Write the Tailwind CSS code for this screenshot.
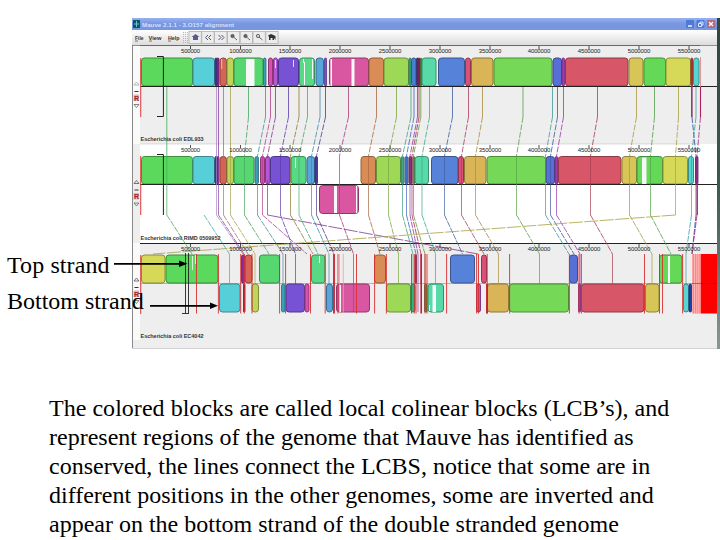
<!DOCTYPE html>
<html lang="en">
<head>
    <meta charset="UTF-8">
    <meta name="viewport" content="width=device-width, initial-scale=1.0">
    <title>Mauve alignment</title>
    <script src="https://cdn.jsdelivr.net/npm/@tailwindcss/browser@4"></script>
</head>
<body class="bg-white w-[720px] h-[540px] overflow-hidden relative font-['Liberation_Serif',serif] text-black">
    <div class="pt-[18px] pl-[132px] flex">
        <div class="w-[585px] h-[331px] bg-[#eeeeee] flex flex-col font-['Liberation_Sans',sans-serif]">
            <!-- title bar -->
            <div class="h-3 shrink-0 bg-linear-to-b from-[#98b1ed] via-[#7796e1] to-[#7896df] flex items-center justify-between pr-[1px] pl-px">
                <div class="flex items-center gap-[2px]">
                    <svg class="w-[7px] h-[8px]" viewBox="0 0 7 8"><rect width="7" height="8" fill="#0c5369"/><path d="M3.5 1v6M1 4h5" stroke="#62c9cc"/></svg>
                    <svg class="w-[94px] h-3" viewBox="0 0 94 12"><text x="0" y="8.5" font-size="6.2" font-weight="bold" fill="#d3dfff" textLength="92">Mauve 2.1.1 - 3.O157 alignment</text></svg>
                </div>
                <svg class="w-[30px] h-[10px]" viewBox="0 0 30 10">
                    <rect x="0" y="1" width="8" height="8" rx="1" fill="#4d78dc"/><path d="M2 7h4" stroke="#fff" stroke-width="1.4"/>
                    <rect x="10.5" y="1" width="8" height="8" rx="1" fill="#4d78dc"/><path d="M14 4V3h3v3h-1M12.5 4.5h3v3h-3z" fill="none" stroke="#dfe8ff"/>
                    <rect x="21" y="1" width="8" height="8" rx="1" fill="#b4687f"/><path d="M23 3l4 4M27 3l-4 4" stroke="#fff" stroke-width="1.3"/>
                </svg>
            </div>
            <!-- menu and tool bar -->
            <div class="h-[15px] shrink-0 bg-linear-to-b from-white to-[#dcdcdc]">
                <svg class="w-[150px] h-[15px]" viewBox="0 0 150 15" font-size="6" font-weight="bold" fill="#333">
                    <text x="3" y="9.5" textLength="8.5" lengthAdjust="spacingAndGlyphs">File</text>
                    <text x="16.5" y="9.5" textLength="13" lengthAdjust="spacingAndGlyphs">View</text>
                    <text x="36" y="9.5" textLength="11.500" lengthAdjust="spacingAndGlyphs">Help</text>
                    <path d="M3 11h3M17 11h3M36 11h3" stroke="#444" stroke-width=".7"/>
                    <path d="M51.500 2v12M53.500 2v12M55.500 2v12" stroke="#aaa" stroke-dasharray="1 1" stroke-width=".8"/>
                    <g id="buttons" stroke="#b0b0b0" stroke-width=".8" fill="#ececec"></g>
                    <path d="M59.500 7l4-3 4 3h-1.500v3h-5v-3z" fill="#5b5b8c"/>
                    <path d="M76 5l-2.500 2.500 2.500 2.500M79 5l-2.500 2.500 2.500 2.500M86.500 5l2.500 2.500-2.500 2.500M89.500 5l2.500 2.500-2.500 2.500" stroke="#555577" fill="none"/>
                    <g fill="#666" stroke="#444" stroke-width=".8"><circle cx="100.500" cy="6" r="1.600"/><path d="M101.500 7l3.500 3"/><circle cx="113.500" cy="6" r="1.600"/><path d="M114.500 7l3.500 3"/><circle cx="126" cy="6" r="1.600" fill="#ddd"/><path d="M127 7l3.500 3"/></g>
                    <path d="M136 5.500l3-1.500 4.500 2v4l-1.500-2v2h-1.500v-2h-2v2H137V7z" fill="#333"/>
                </svg>
            </div>
            <!-- alignment panels, drawn in page coordinates -->
            <svg id="map" class="w-[585px] h-[304px] shrink-0" viewBox="132 45 585 304"></svg>
        </div>
        <div class="w-[3px] h-[331px] bg-linear-to-b from-[#34433e] via-[#3e5951] to-[#8a9692]"></div>
    </div>

    <div class="pt-[45px] pl-[49px] text-[24px] leading-[29px] whitespace-nowrap">
        <p class="tracking-[0.03px]">The colored blocks are called local colinear blocks (LCB’s), and</p>
        <p>represent regions of the genome that Mauve has identified as</p>
        <p>conserved, the lines connect the LCBS, notice that some are in</p>
        <p>different positions in the other genomes, some are inverted and</p>
        <p>appear on the bottom strand of the double stranded genome</p>
    </div>

    <!-- strand callouts over the alignment -->
    <p class="absolute left-[7px] top-[251px] text-[24px] leading-[29px] whitespace-nowrap tracking-[0.1px]">Top strand</p>
    <p class="absolute left-[7px] top-[287px] text-[24px] leading-[29px] whitespace-nowrap">Bottom strand</p>
    <svg class="absolute left-0 top-0 w-[720px] h-[540px]" viewBox="0 0 720 540">
        <path d="M114 263.800h66M150 305.800h62" stroke="#000" stroke-width="1.700"/>
        <path d="M179 260.500l8.500 3.300-8.500 3.300zM210 302.500l8 3.300-8 3.300z"/>
    </svg>

    <script>
        const NS = 'http://www.w3.org/2000/svg';
        const map = document.getElementById('map');

        function add(parent, tag, attrs, text) {
            const el = document.createElementNS(NS, tag);
            for (const k in attrs) el.setAttribute(k, attrs[k]);
            if (text) el.textContent = text;
            parent.appendChild(el);
        }
        function rect(x, y, w, h, fill, extra) {
            add(map, 'rect', { x: x, y: y, width: w, height: h, fill: fill, ...extra });
        }
        function line(d, stroke, extra) {
            add(map, 'path', { d: d, stroke: stroke, fill: 'none', ...extra });
        }
        function shade(hex) {
            const n = [1, 3, 5].map(i => Math.round(parseInt(hex.slice(i, i + 2), 16) * 0.66));
            return `rgb(${n})`;
        }
        function blocks(list, y, h) {
            for (const [x1, x2, c] of list) {
                const w = x2 - x1;
                rect(x1, y, w, h, c, { rx: Math.min(3, w / 2), stroke: shade(c), 'stroke-width': w < 4 ? 0.8 : 1 });
            }
        }

        for (let i = 0; i < 7; i++) {
            add(document.getElementById('buttons'), 'rect', { x: 57 + i * 12.8, y: 1.5, width: 12.3, height: 12 });
        }

        // panel backgrounds
        rect(132, 45, 585, 99, '#eeeeee');
        rect(132, 144, 585, 99, '#ffffff');
        rect(132, 243, 585, 106, '#eeeeee');
        rect(132, 46, 8, 98, '#fafafa');
        rect(132, 144, 8, 99, '#eeeeee');
        rect(132, 243, 8, 97, '#fafafa');
        line('M132.500 45V349', '#8a8a8a');
        line('M132 348.500H717', '#d2d2d2');

        const names = ['Escherichia coli EDL933', 'Escherichia coli RIMD 0509952', 'Escherichia coli EC4042'];
        const nameW = [63, 80, 63];

        // block colours
        const G = '#5ad95c', CY = '#57cfd9', NV = '#4040a8', PU = '#8a2a90', RO = '#d96257', YG = '#bfd557', G2 = '#57d770', TE = '#3aa0b8',
            MG = '#d94fb0', VI = '#b558d8', P2 = '#7852d5', G3 = '#57d985', BL = '#57a5d9', PK = '#d957a0', OR = '#d98c55', LI = '#9dd957',
            T2 = '#35b080', B2 = '#4a80d0', MA = '#8a2860', AQ = '#57d9a8', B3 = '#5782d9', CR = '#d95078', GO = '#d9b557', G4 = '#75d957',
            B4 = '#5770d5', P3 = '#a838b8', RE = '#d75768', YE = '#d7c557', G5 = '#63d957', Y2 = '#d5d957', T3 = '#57d5d0', DG = '#5a9038';

        blocks([[141.5, 192.5, G], [193, 214.5, CY], [215, 217, NV], [217, 219, PU], [220, 226.5, RO], [227, 233.5, YG], [234, 263, G2],
            [263.5, 266, TE], [268.5, 272.5, MG], [273.5, 277.5, VI], [278.5, 298.5, P2], [299.5, 314.5, G3], [316, 323.5, BL], [324.5, 326.5, P2],
            [329.5, 368.5, PK], [369, 383.5, OR], [384, 408.5, LI], [409, 411, T2], [411.5, 416, B2], [416.5, 418, NV], [418, 420, MA], [420.5, 421.5, DG],
            [422, 436, AQ], [438.5, 464.5, B3], [465.5, 470.5, CR], [471.5, 493, GO], [494, 552, G4], [553, 561.5, B4], [562, 564.5, P3],
            [565.5, 628, RE], [629, 643, YE], [644, 665.5, G5], [666, 690.5, Y2], [691, 692.5, '#d82c2c'], [693.5, 699, T3]], 58, 28);
        blocks([[141.5, 192.5, G], [193, 214.5, CY], [215, 217, NV], [217, 219, PU], [220, 226.5, RO], [227, 233.5, YG], [234, 254, G2],
            [255, 258.5, TE], [260.5, 264.5, MG], [265.5, 270, VI], [270.5, 290, P2], [291, 306, G3], [307, 314.5, BL], [315, 317.5, NV],
            [361, 375.5, OR], [376.5, 400.5, LI], [401, 404, T2], [405, 408, B2], [409, 412, MA], [413, 414.5, DG], [415, 428.5, AQ],
            [431.5, 458, B3], [458.5, 463.5, CR], [464.5, 486, GO], [487, 545.5, G4], [546, 554.5, B4], [555, 558, P3], [558.5, 621, RE],
            [622, 636.5, YE], [637, 662.5, G5], [663, 687.5, Y2], [688.5, 693.5, T3], [695.5, 698, PU]], 156.5, 27.5);
        blocks([[319.5, 358.5, PK]], 185.5, 28);
        blocks([[141.5, 165, Y2], [166, 218, G], [241.5, 244.5, PU], [245, 252, RO], [259.5, 279.5, G2], [311.5, 325, G3], [374.5, 385.5, OR],
            [415, 416.5, MA], [450.5, 474.5, B3], [481.5, 486.5, CR], [569.5, 577.5, B4], [659.5, 682, G5]], 255, 28);
        blocks([[219.5, 240, CY], [243.5, 245, MA], [252, 258.5, YG], [281.5, 285, TE], [286, 304.5, P2], [305, 309, MG], [326.5, 332.5, BL],
            [336.5, 369.5, PK], [386.5, 410.5, LI], [411, 415, T2], [424.5, 427, DG], [428, 443.5, AQ], [476.5, 480.5, VI], [487.5, 508.5, GO],
            [509.5, 568.5, G4], [578.5, 580.5, P3], [581.5, 644, RE], [645.5, 659, YE], [683.5, 688.5, T3], [689, 691.5, '#2040a8']], 284, 28);

        // low-conservation gaps inside blocks
        for (const [x, y, w, h] of [[246, 59, 8.5, 27], [304, 62, 1, 23], [312, 59, 1, 20], [303, 59, 1, 4], [330.5, 59, 1.5, 27], [351.5, 59, 3, 27],
            [221.5, 59, 0.6, 10], [275, 60, 0.8, 8], [293, 60, 0.8, 7], [267, 158, 0.8, 22], [295, 158, 0.8, 10], [334, 186, 3, 27], [356, 186, 1.2, 27],
            [642, 157.5, 4.5, 26.5], [192, 256, 0.8, 14], [195, 255, 0.8, 9], [319, 256, 1, 7], [339, 285, 2, 27], [432.5, 285, 3.5, 27], [429, 305, 1, 6],
            [668, 256, 2, 27]]) {
            rect(x, y, w, h, '#f8f8f8');
        }

        // genome axes
        line('M140 86.500H717', '#222');
        line('M140 184.500H717', '#222');
        line('M140 283.500H717', '#555', { 'stroke-width': 0.4 });
        line('M140 45.500H700', '#333');
        line('M132 45.500H717', '#777', { 'stroke-width': 0.8 });
        line('M140 144H700', '#bbb', { 'stroke-width': 0.5 });
        line('M140 243.500H717', '#222');

        // links: colour, x in genome 1, 2, 3, end y in genome 3
        const links = [['#3fae58', 166.8, 166.8, 192, 254], ['#4aa8b0', null, 204, 229.5, 284], ['#a78ac8', 216.5, 216.5, 243, 254],
            ['#8a45a0', 218.5, 218.5, 244, 284], ['#b07060', 223.5, 223.5, 248, 254], ['#a5a552', 230.5, 230.5, 255, 284],
            ['#48a560', 248.5, 244.5, 269, 254], ['#4090a0', 265.5, 257.5, 283, 284], ['#b0408c', 270.5, 262.5, 307, 254],
            ['#7d3890', 275.5, 267.5, 478, 254], ['#5a3ca8', 288.5, 280.5, 295.5, 284], ['#8c7a30', 299, 290.5, 313, 254],
            ['#48a868', 307.5, 299, 318, 254], ['#4088a8', 320, 311.5, 329, 284], ['#4c3888', 325.5, 316.5, 334, 254],
            ['#a83c78', 348.5, 339.5, 353.5, 312], ['#a86840', 376.5, 368.5, 380, 254], ['#7aa840', 396.5, 388.5, 398.5, 284],
            ['#40a080', 411, 402.5, 413, 284], ['#4060c0', 414, 406.5, 416, 284], ['#8840a0', 417.5, 410, 418, 312],
            ['#b02860', 419, 412, 421, 284], ['#689838', 420.8, 413.5, 425, 284], ['#40a888', 429.5, 422, 435.5, 284],
            ['#4060a0', 452.5, 444.5, 462.5, 254], ['#a83c60', 468.5, 461.5, 484, 254], ['#a88c40', 482.5, 475.5, 498.5, 284],
            ['#58a048', 523, 516.5, 539.5, 284], ['#409898', 552.5, 545.5, 569, 254], ['#4058a0', 557.5, 550.5, 574, 254],
            ['#9838a8', 563.5, 556.5, 580, 284], ['#a83c50', 597.5, 590.5, 612.5, 284], ['#a89840', 636.5, 629.5, 652, 284],
            ['#50a048', 654.5, 650.5, 671, 254], ['#a8a040', 678.5, 675.5, 153, 254], ['#2848a0', 692, 696, 692, 254],
            ['#40a0a0', 696, 691.5, 686, 284], ['#a03080', 700.5, 697, 692, 254]];
        for (const [c, a, b, d, end] of links) {
            if (a) {
                line(`M${a} 87V117`, c, { 'stroke-width': 0.8 });
                line(`M${a} 117L${b} 156`, c, { 'stroke-width': 0.8, 'stroke-dasharray': a === b ? 'none' : '6 1.5' });
                line(`M${b} 156V215`, c, { 'stroke-width': 0.7 });
            }
            line(`M${b} 215L${d} 254`, c, { 'stroke-width': 0.8, 'stroke-dasharray': Math.abs(b - d) > 100 ? '14 1.5' : '6 1' });
            if (end > 254) line(`M${d} 254V${end}`, c, { 'stroke-width': 0.7 });
        }
        line('M691.700 86V117', '#c82838', { 'stroke-width': 1.3 });
        line('M700.500 57V87', '#e58080', { 'stroke-width': 0.8 });
        line('M700.500 87V117', '#b02060', { 'stroke-width': 1.1 });
        line('M697.300 157V215', '#b02060', { 'stroke-width': 1.1 });

        // contig boundaries
        for (const y of [58, 156, 255]) line(`M140.700 ${y}v59`, '#e04848', { 'stroke-width': 1.1 });
        for (const x of [196.5, 218.4, 240.7, 244.3, 252, 279.6, 285.6, 310.5, 325.2, 338, 356.5, 374.6, 386.4, 411.5, 414.3, 416, 425, 427, 446.6,
            476.6, 478.5, 487.2, 509.6, 569.4, 579, 581.4, 644.5, 659.5, 662.5, 682.6]) {
            line(`M${x} 254V313.500`, '#d83030', { 'stroke-width': 0.9 });
        }
        for (const x of [339.5, 343.3]) line(`M${x} 254V313`, '#f0a0a0', { 'stroke-width': 0.8 });
        line('M334 254V313.500M487 284V313.500', '#c42030', { 'stroke-width': 1.8 });
        line('M421.200 254V313.500', '#b82048', { 'stroke-width': 1.6 });
        rect(692.3, 254, 9, 59.5, '#ff8585');
        line('M694.500 254V313.500M696.800 254V313.500M698.800 254V313.500', '#ffc8c8', { 'stroke-width': 0.7 });
        rect(701, 254, 16, 59.5, '#ff0000');
        line('M692 283.500H717', '#901010', { 'stroke-width': 0.5 });

        // selection brackets
        line('M157 56.500H163.400V116.500H157', '#222');
        line('M157 154.500H163.400V215', '#222');
        line('M185.500 253V313.500M188.500 253V313.500M182 313.500H189', '#222', { 'stroke-width': 0.9 });

        // rulers, names and side controls
        [45, 144, 243].forEach((top, g) => {
            [190.5, 240.5, 290, 340, 390, 440, 490, 539, 589, 639, 689].forEach((x, i) => {
                const w = i ? 22.5 : 19;
                line(`M${x} ${top + 1}v3`, '#222', { 'stroke-width': 0.8 });
                add(map, 'text', { x: x - w / 2, y: top + 8, 'font-size': 6, fill: '#222', textLength: w }, String((i + 1) * 500000));
            });
            const y = [141, 239.5, 338][g];
            add(map, 'text', { x: 140.5, y: y, 'font-size': 6, 'font-weight': 'bold', fill: '#333', textLength: nameW[g], lengthAdjust: 'spacingAndGlyphs' }, names[g]);
            const m = [98, 196.5, 294][g];
            const c = g === 0 ? '#aaa' : '#555';
            line(`M134 ${m - 13}l2.500 -3 2.500 3z`, c, { 'stroke-width': 0.8 });
            line(`M134.500 ${m - 6.5}h4`, '#333', { 'stroke-width': 1 });
            rect(133.5, m - 3.5, 5.5, 6.5, '#e3b4b8');
            add(map, 'text', { x: 134, y: m + 2.5, 'font-size': 7, 'font-weight': 'bold', fill: '#a02030' }, 'R');
            line(`M134 ${m + 6.5}l2.500 3 2.500 -3z`, '#666', { 'stroke-width': 0.8 });
        });
    </script>
</body>
</html>
